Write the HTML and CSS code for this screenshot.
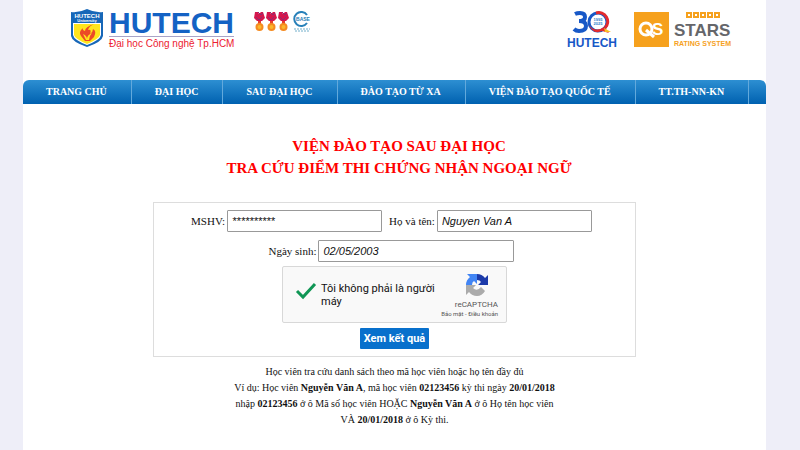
FILE: index.html
```html
<!DOCTYPE html>
<html lang="vi">
<head>
<meta charset="utf-8">
<meta name="viewport" content="width=device-width, initial-scale=1">
<title>HUTECH - Tra cứu điểm thi</title>
<link rel="stylesheet" href="styles.css">
</head>
<body>
<div class="page">
  <header class="header">
    <div class="brand">
      <svg class="shield" width="34" height="38" viewBox="0 0 34 38" aria-hidden="true">
        <path d="M1 3Q9 4 17 0Q25 4 33 3V27Q32 33 17 38Q2 33 1 27Z" fill="#1767b8"/>
        <path d="M3 14H31V26Q30 31 17 36Q4 31 3 26Z" fill="#fff"/>
        <path d="M4 15H30V26Q29 30 17 35Q5 30 4 26Z" fill="#ffe51c"/>
        <text x="17" y="9" class="shield-name">HUTECH</text>
        <text x="17" y="13" class="shield-sub">University</text>
        <path d="M24 15Q15 18 15 22Q12 21 13 19Q8 23 11 27L15 32H20L24 28Q27 22 23 20Q23 23 20 25Q22 20 18 21Q19 17 24 15Z" fill="#ec4a27"/>
        <path d="M13 25Q17 27 17 30Q17 26 22 24Q19 27 19 31H16Z" fill="#ffe51c"/>
      </svg>
      <div class="brand-text">
        <div class="brand-name">HUTECH</div>
        <div class="brand-sub">Đại học Công nghệ Tp.HCM</div>
      </div>
    </div>
    <div class="awards">
      <svg width="58" height="24" viewBox="0 0 58 24" aria-hidden="true">
        <defs>
          <g id="medal">
            <path d="M1 1H4L5 3L7 1H9L11 7L8 10H3L0 7Z" fill="#d4164d"/>
            <path d="M4 1L7 4L9 2M2 6L5 9L8 6" fill="none" stroke="#8d2d73" stroke-width="1"/>
            <path d="M4 10H7V13H4Z" fill="#e5402b"/>
            <circle cx="5.500" cy="16" r="4" fill="#f58b20"/>
            <circle cx="5.500" cy="16" r="2" fill="#fbb72c"/>
          </g>
        </defs>
        <use href="#medal"/><use href="#medal" x="12"/><use href="#medal" x="24"/>
        <path d="M53 4A7 7 0 1 0 53 12" fill="none" stroke="#2780b9" stroke-width="2"/>
        <text x="49" y="10" class="cert">BASE</text>
        <path d="M40 18H56M41 20H55" stroke="#71aeca" stroke-dasharray="2 1"/>
      </svg>
    </div>
    <div class="ratings">
      <svg width="52" height="38" viewBox="0 0 52 38" aria-hidden="true">
        <path d="M9 3Q11 2 14 2Q19 2 19 6Q19 10 13 10Q20 10 20 15Q20 20 13 20Q10 20 8 18" fill="none" stroke="#1758c7" stroke-width="4"/>
        <circle cx="32" cy="11" r="9" fill="none" stroke="#1758c7" stroke-width="3"/>
        <path d="M30 2A9 9 0 0 1 39 17" fill="none" stroke="#e32b2d" stroke-width="3"/>
        <path d="M23 14Q29 22 38 16L43 22L36 20Q27 24 23 14Z" fill="#e32b2d"/>
        <path d="M38 17L45 21L39 21Z" fill="#f8bd22"/>
        <text x="32" y="10" class="years">1995</text>
        <text x="32" y="14" class="years">2025</text>
        <text x="26" y="36" class="anniversary">HUTECH</text>
      </svg>
      <svg width="100" height="37" viewBox="0 0 100 37" aria-hidden="true">
        <path d="M0 1H35V36H0Z" fill="#f6a11d"/>
        <circle cx="12" cy="18" r="6" fill="none" stroke="#fff" stroke-width="3"/>
        <path d="M12 19L20 26" stroke="#fff" stroke-width="3"/>
        <text x="18" y="24" class="qs">S</text>
        <path d="M53 2H57V6H53ZM60 2H64V6H60ZM67 2H71V6H67ZM74 2H78V6H74ZM81 2H85V6H81Z" fill="none" stroke="#f6a11d" stroke-width="2"/>
        <text x="40" y="25" class="stars">STARS</text>
        <text x="40" y="35" class="rating">RATING SYSTEM</text>
      </svg>
    </div>
  </header>

  <nav class="nav">
    <a href="#">TRANG CHỦ</a>
    <a href="#">ĐẠI HỌC</a>
    <a href="#">SAU ĐẠI HỌC</a>
    <a href="#">ĐÀO TẠO TỪ XA</a>
    <a href="#">VIỆN ĐÀO TẠO QUỐC TẾ</a>
    <a href="#">TT.TH-NN-KN</a>
  </nav>

  <main>
    <h1 class="title">VIỆN ĐÀO TẠO SAU ĐẠI HỌC<br>TRA CỨU ĐIỂM THI CHỨNG NHẬN NGOẠI NGỮ</h1>

    <form class="lookup">
      <div class="row">
        <div class="field">
          <label for="mshv">MSHV:</label>
          <input id="mshv" type="text" value="**********">
        </div>
        <div class="field">
          <label for="name">Họ và tên:</label>
          <input id="name" type="text" value="Nguyen Van A">
        </div>
      </div>
      <div class="row">
        <div class="field">
          <label for="dob">Ngày sinh:</label>
          <input class="wide" id="dob" type="text" value="02/05/2003">
        </div>
      </div>
      <div class="captcha">
        <svg width="22" height="18" viewBox="0 0 22 18" aria-hidden="true">
          <path d="M2 9L8 15L20 2" fill="none" stroke="#109655" stroke-width="3"/>
        </svg>
        <p class="captcha-label">Tôi không phải là người máy</p>
        <div class="captcha-brand">
          <svg width="24" height="24" viewBox="0 0 24 24" aria-hidden="true">
            <path d="M12 1Q17 1 20 5L23 2V12H13L16 9Q15 7 12 7Z" fill="#1c3aa9"/>
            <path d="M1 12Q1 7 5 4L2 1H12V11L9 8Q7 9 7 12Z" fill="#4285f4"/>
            <path d="M1 12H11L8 15Q12 19 16 14L20 18Q17 23 12 23Q7 23 4 19L1 22Z" fill="#ababab"/>
          </svg>
          <span class="captcha-name">reCAPTCHA</span>
          <span class="captcha-links"><a href="#">Bảo mật</a> - <a href="#">Điều khoản</a></span>
        </div>
      </div>
      <button class="submit" type="button">Xem kết quả</button>
    </form>

    <p class="notes">
      Học viên tra cứu danh sách theo mã học viên hoặc họ tên đầy đủ<br>
      Ví dụ: Học viên <b>Nguyễn Văn A</b>, mã học viên <b>02123456</b> kỳ thi ngày <b>20/01/2018</b><br>
      nhập <b>02123456</b> ở ô Mã số học viên HOẶC <b>Nguyễn Văn A</b> ở ô Họ tên học viên<br>
      VÀ <b>20/01/2018</b> ở ô Kỳ thi.
    </p>
  </main>
</div>
</body>
</html>
```
FILE: styles.css
```css
* { box-sizing: border-box; }

body {
  margin: 0;
  padding: 0 34px 0 23px;
  background: #eeeef8;
  color: #111;
  font-family: "Liberation Serif", serif;
  font-size: 11px;
}

.page { min-height: 100vh; background: #fff; }

.header {
  display: flex;
  align-items: flex-start;
  height: 80px;
  padding: 9px 32px 0 47px;
}

.brand { display: flex; gap: 5px; }

.brand-text { font-family: "Liberation Sans", sans-serif; white-space: nowrap; }

.brand-name {
  border-bottom: 1px solid #a9a4c7;
  color: #1462c4;
  font-size: 30px;
  font-weight: bold;
  line-height: 27px;
}

.brand-sub { color: #ec2030; font-size: 10px; line-height: 14px; }

.shield-name, .shield-sub, .cert, .years, .anniversary {
  font-family: "Liberation Sans", sans-serif;
  font-weight: bold;
  text-anchor: middle;
}

.shield-name { fill: #fff; font-size: 6px; }
.shield-sub { fill: #fff; font-size: 4px; }
.cert { fill: #2780b9; font-size: 5px; }
.years { fill: #2780c9; font-size: 4px; }
.anniversary { fill: #1758c7; font-size: 12px; }

.awards { margin: 2px 0 0 20px; }

.ratings { display: flex; gap: 16px; margin: 2px 0 0 auto; }

.qs, .stars, .rating { font-family: "Liberation Sans", sans-serif; font-weight: bold; }
.qs { fill: #fff; font-size: 17px; }
.stars { fill: #65666a; font-size: 17px; }
.rating { fill: #f6a11d; font-size: 7px; }

.nav {
  display: flex;
  border-radius: 6px 6px 0 0;
  background: linear-gradient(#2d8fd2, #0061b0);
  font-size: 10px;
}

.nav a {
  padding: 0 24px 0 23px;
  border-right: 1px solid #62a9dc;
  color: #fff;
  font-weight: bold;
  line-height: 24px;
  text-decoration: none;
  white-space: nowrap;
}

.title {
  margin: 31px 0 0 9px;
  color: #f00;
  font-size: 15px;
  line-height: 22px;
  text-align: center;
}

.lookup {
  display: flex;
  flex-direction: column;
  align-items: center;
  width: 65%;
  margin: 23px auto 0;
  padding: 7px 0;
  border: 1px solid #ddd;
}

.row { display: flex; gap: 7px; margin: 0 6px 8px 0; }

.field { display: flex; align-items: center; gap: 2px; }

input {
  width: 155px;
  height: 22px;
  padding: 0 4px;
  border: 1px solid #999;
  border-radius: 1px;
  background: #fff;
  color: #111;
  font: italic 11px "Liberation Sans", sans-serif;
}

.wide { width: 196px; }

.captcha {
  display: flex;
  width: 225px;
  height: 57px;
  margin: -4px 0 5px;
  padding: 6px 8px 0 12px;
  border: 1px solid #d8d8d8;
  border-radius: 2px;
  background: #f9f9f9;
  font-family: Roboto, sans-serif;
}

.captcha > svg { flex: none; margin-top: 9px; }

.captcha-label {
  flex: 1;
  margin: 9px 0 0 4px;
  font-size: 11px;
  line-height: 13px;
}

.captcha-brand { display: flex; flex-direction: column; align-items: flex-end; color: #555; }

.captcha-brand svg { margin-right: 9px; }

.captcha-name { margin-top: 3px; font-size: 8px; line-height: 10px; }

.captcha-links { font-size: 6px; line-height: 8px; white-space: nowrap; }

.captcha-links a { color: inherit; text-decoration: none; }

.submit {
  height: 21px;
  padding: 0 4px;
  border: 0;
  border-radius: 1px;
  background: #0870cc;
  color: #fff;
  font: bold 11px Roboto, sans-serif;
}

.notes { margin: 7px 0 0; font-size: 10px; line-height: 16px; text-align: center; }
```
